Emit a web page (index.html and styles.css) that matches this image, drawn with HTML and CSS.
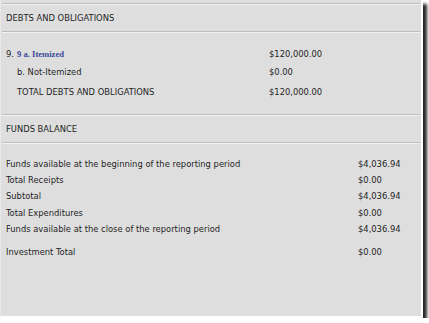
FILE: index.html
```html
<!DOCTYPE html>
<html>
<head>
<meta charset="utf-8">
<link rel="stylesheet" href="styles.css">
</head>
<body>
<div class="frame">
  <div class="sep first"></div>
  <div class="head">DEBTS AND OBLIGATIONS</div>
  <div class="sep"></div>
  <div class="debts">
    <div class="num">9.</div><div class="lbl"><span class="link">9 a. Itemized</span></div><div class="val">$120,000.00</div>
    <div class="num"></div><div class="lbl">b. Not-Itemized</div><div class="val">$0.00</div>
    <div class="num gap"></div><div class="lbl gap">TOTAL DEBTS AND OBLIGATIONS</div><div class="val gap">$120,000.00</div>
  </div>
  <div class="sep"></div>
  <div class="head">FUNDS BALANCE</div>
  <div class="sep"></div>
  <div class="funds">
    <div class="lbl">Funds available at the beginning of the reporting period</div><div class="val">$4,036.94</div>
    <div class="lbl">Total Receipts</div><div class="val">$0.00</div>
    <div class="lbl">Subtotal</div><div class="val">$4,036.94</div>
    <div class="lbl">Total Expenditures</div><div class="val">$0.00</div>
    <div class="lbl">Funds available at the close of the reporting period</div><div class="val">$4,036.94</div>
    <div class="lbl gap">Investment Total</div><div class="val gap">$0.00</div>
  </div>
</div>
</body>
</html>
```
FILE: styles.css
```css
html, body {
  margin: 0;
  padding: 0;
  background: #ffffff;
}
.frame {
  box-sizing: border-box;
  width: 423px;
  height: 318px;
  background: #dedede;
  border-right: 2px solid #ffffff;
  border-bottom: 2px solid #ffffff;
  border-left: 1px solid #e8e8e8;
  box-shadow: 4px 4px 3px rgba(0, 0, 0, 0.85);
  font-family: "DejaVu Sans Condensed", "DejaVu Sans", sans-serif;
  font-size: 9.3px;
  color: #1e1e1e;
  overflow: hidden;
}
.sep {
  height: 1px;
  margin: 0 1px 0 1px;
  background: #bdbdbd;
  border-bottom: 1px solid #f2f2f2;
}
.sep.first {
  margin-top: 3px;
}
.head {
  height: 26px;
  line-height: 26px;
  padding-left: 5px;
}
.debts {
  display: grid;
  grid-template-columns: 11px 252px auto;
  grid-auto-rows: 18px;
  align-items: center;
  padding: 11px 0 16px 5px;
}
.debts .gap {
  margin-top: 4px;
}
.link {
  font-family: "Liberation Serif", serif;
  font-weight: bold;
  font-size: 8.6px;
  color: #3a4b9c;
}
.funds {
  display: grid;
  grid-template-columns: 352px auto;
  grid-auto-rows: 16.3px;
  align-items: center;
  padding: 11px 0 0 5px;
}
.funds .gap {
  margin-top: 13px;
}
```
